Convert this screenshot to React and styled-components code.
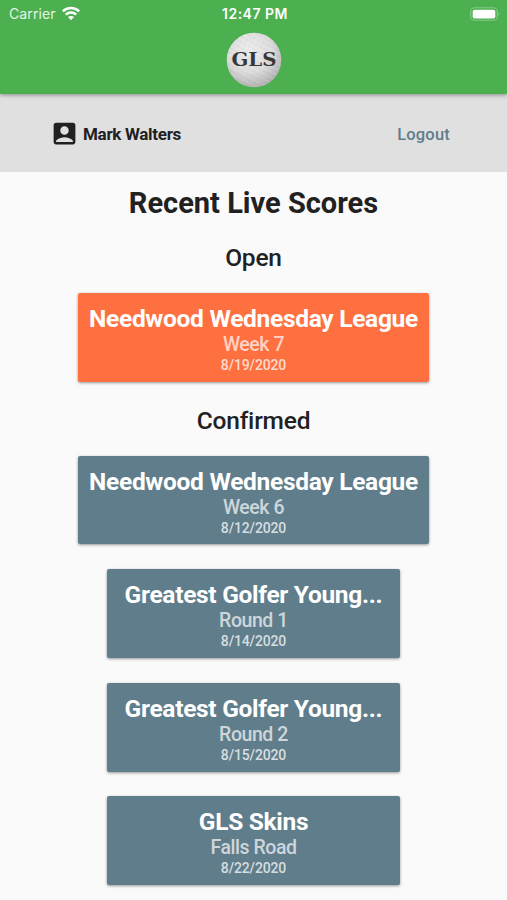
import React from 'react';
import styled, { createGlobalStyle } from 'styled-components';
import { MdAccountBox } from 'react-icons/md';

const GlobalStyle = createGlobalStyle`
  * {
    box-sizing: border-box;
  }

  body {
    margin: 0;
    background: #fafafa;
    color: #212121;
    font-family: Roboto, "Liberation Sans", sans-serif;
  }
`;

const Screen = styled.div`
  width: 100%;
  height: 900px;
  overflow: hidden;
  background: #fafafa;
`;

const Header = styled.header`
  position: relative;
  height: 94px;
  background: #4caf50;
  box-shadow: 0 1px 4px rgba(0, 0, 0, 0.4);
`;

const StatusBar = styled.div`
  display: grid;
  grid-template-columns: 1fr auto 1fr;
  align-items: center;
  height: 27px;
  padding: 0 6px 0 9px;
  color: #fff;
  font-family: Inter, sans-serif;
  font-size: 14px;
`;

const Carrier = styled.div`
  display: flex;
  align-items: center;
  gap: 6px;
  color: #e4f5e5;
  letter-spacing: 0.1px;
`;

const Clock = styled.div`
  font-size: 14px;
  font-weight: 600;
  letter-spacing: 0.5px;
`;

const BatteryIcon = styled.svg`
  justify-self: end;
`;

const LogoRow = styled.div`
  display: flex;
  justify-content: center;
  padding-top: 5px;
`;

const UserBar = styled.div`
  display: flex;
  align-items: center;
  justify-content: space-between;
  height: 78px;
  padding: 1px 57px 0 50px;
  background: #e0e0e0;
`;

const User = styled.div`
  display: flex;
  align-items: center;
  gap: 4px;
  font-size: 17px;
  font-weight: 700;
  letter-spacing: -0.3px;
`;

const Logout = styled.a`
  padding-top: 1px;
  color: #607d8b;
  font-size: 16.5px;
  font-weight: 500;
  letter-spacing: 0.2px;
`;

const Title = styled.h1`
  margin: 0;
  padding-top: 13px;
  font-size: 29px;
  font-weight: 700;
  line-height: 36px;
  letter-spacing: 0;
  text-align: center;
`;

const SectionTitle = styled.h2`
  margin: 0;
  padding-top: ${({ $top }) => $top}px;
  font-size: 24.5px;
  font-weight: 500;
  line-height: 30px;
  letter-spacing: -0.2px;
  text-align: center;
`;

const CardList = styled.div`
  display: flex;
  flex-direction: column;
  align-items: center;
  gap: 24.9px;
  padding-top: 20px;
`;

const Card = styled.div`
  width: ${({ $wide }) => ($wide ? 351 : 293)}px;
  height: 88.7px;
  padding-top: 11px;
  border-radius: 2px;
  background: ${({ $open }) => ($open ? '#ff7040' : '#607d8b')};
  box-shadow: 0 1px 3px rgba(0, 0, 0, 0.4);
  text-align: center;
  white-space: nowrap;
`;

const CardName = styled.div`
  color: #fff;
  font-size: 24.5px;
  font-weight: 700;
  line-height: 30px;
  letter-spacing: -0.3px;
`;

const CardRound = styled.div`
  color: rgba(255, 255, 255, 0.7);
  font-size: 19.5px;
  font-weight: 500;
  line-height: 22px;
  letter-spacing: -0.45px;
`;

const CardDate = styled.div`
  color: rgba(255, 255, 255, 0.75);
  font-size: 14px;
  font-weight: 500;
  line-height: 19px;
  letter-spacing: -0.15px;
`;

const openScores = [
  { name: 'Needwood Wednesday League', round: 'Week 7', date: '8/19/2020', wide: true },
];

const confirmedScores = [
  { name: 'Needwood Wednesday League', round: 'Week 6', date: '8/12/2020', wide: true },
  { name: 'Greatest Golfer Young...', round: 'Round 1', date: '8/14/2020' },
  { name: 'Greatest Golfer Young...', round: 'Round 2', date: '8/15/2020' },
  { name: 'GLS Skins', round: 'Falls Road', date: '8/22/2020' },
];

const WifiIcon = () => (
  <svg width="18" height="15" viewBox="0 0 18 14" fill="none" stroke="#fff" strokeWidth="2.5">
    <path d="M0.8 4.9C5.3 0.4 12.7 0.4 17.2 4.9" />
    <path d="M3.8 8.1C6.7 5.3 11.3 5.3 14.2 8.1" />
    <path d="M6 10.6C7.7 9 10.3 9 12 10.6L9 13.7Z" fill="#fff" stroke="none" />
  </svg>
);

const Battery = () => (
  <BatteryIcon width="31" height="14" viewBox="0 0 31 14">
    <rect x="0.7" y="0.7" width="26.6" height="12.6" rx="3.8" fill="none" stroke="#86ca89" strokeWidth="1.1" />
    <rect x="2.7" y="2.7" width="22.6" height="8.8" rx="1.8" fill="#fff" />
    <path d="M28.6 4.8Q30.6 7 28.6 9.2Z" fill="#86ca89" />
  </BatteryIcon>
);

const Logo = () => (
  <svg width="56" height="56" viewBox="0 0 56 56">
    <defs>
      <radialGradient id="ball" cx="42%" cy="32%" r="68%">
        <stop offset="0" stopColor="#eeeeee" />
        <stop offset="0.6" stopColor="#dcdcdc" />
        <stop offset="1" stopColor="#b2b2b2" />
      </radialGradient>
      <pattern id="dimples" width="5" height="5" patternUnits="userSpaceOnUse" patternTransform="rotate(28)">
        <circle cx="2.5" cy="2.5" r="1.7" fill="#777" fillOpacity="0.08" />
        <path d="M1 3.2A1.8 1.8 0 0 0 4 3.2" fill="none" stroke="#fff" strokeOpacity="0.4" strokeWidth="0.7" />
      </pattern>
    </defs>
    <circle cx="28" cy="28" r="27.3" fill="url(#ball)" />
    <circle cx="28" cy="28" r="27.3" fill="url(#dimples)" />
    <text
      x="28"
      y="34"
      textAnchor="middle"
      textLength="45"
      lengthAdjust="spacingAndGlyphs"
      fontFamily="DejaVu Serif, serif"
      fontWeight="700"
      fontSize="19"
      fill="#383838"
    >
      GLS
    </text>
  </svg>
);

const ScoreCard = ({ score, open }) => (
  <Card $wide={score.wide} $open={open}>
    <CardName>{score.name}</CardName>
    <CardRound>{score.round}</CardRound>
    <CardDate>{score.date}</CardDate>
  </Card>
);

const App = () => {
  return (
    <>
      <GlobalStyle />
      <Screen>
        <Header>
          <StatusBar>
            <Carrier>
              Carrier
              <WifiIcon />
            </Carrier>
            <Clock>12:47 PM</Clock>
            <Battery />
          </StatusBar>
          <LogoRow>
            <Logo />
          </LogoRow>
        </Header>
        <UserBar>
          <User>
            <MdAccountBox size={29} />
            Mark Walters
          </User>
          <Logout>Logout</Logout>
        </UserBar>
        <Title>Recent Live Scores</Title>
        <SectionTitle $top={22}>Open</SectionTitle>
        <CardList>
          {openScores.map((score) => (
            <ScoreCard key={score.date} score={score} open />
          ))}
        </CardList>
        <SectionTitle $top={24}>Confirmed</SectionTitle>
        <CardList>
          {confirmedScores.map((score) => (
            <ScoreCard key={score.date} score={score} />
          ))}
        </CardList>
      </Screen>
    </>
  );
};

export default App;
